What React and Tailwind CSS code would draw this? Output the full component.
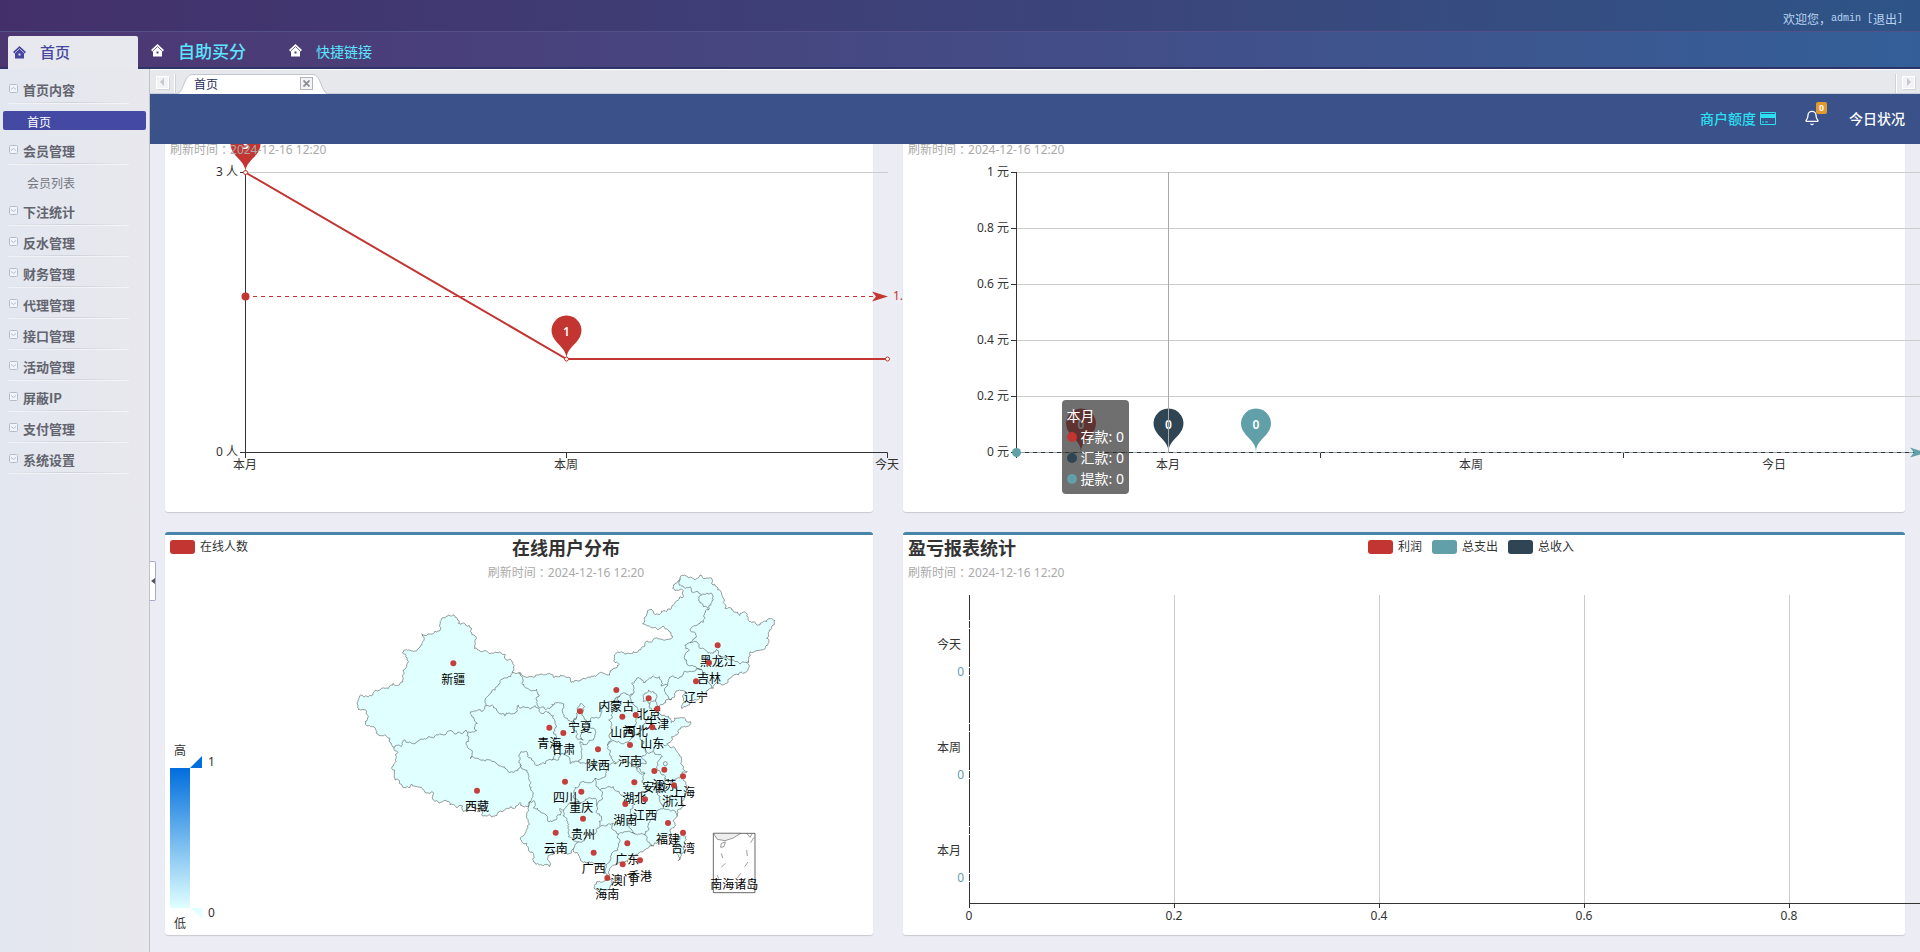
import React from 'react';
import { Bell } from 'lucide-react';

const RED = '#c23531';
const NAVY = '#2f4554';
const TEAL = '#61a0a8';

const MENU = [
  { title: '首页内容', items: [{ name: '首页', active: true }] },
  { title: '会员管理', items: [{ name: '会员列表' }] },
  { title: '下注统计' },
  { title: '反水管理' },
  { title: '财务管理' },
  { title: '代理管理' },
  { title: '接口管理' },
  { title: '活动管理' },
  { title: '屏蔽IP' },
  { title: '支付管理' },
  { title: '系统设置' },
];

// Map geometry, three units per pixel
const MAINLAND = [
  [-428, 432], [-418, 405], [-380, 398], [-355, 385], [-320, 370], [-290, 355], [-290, 330], [-280, 315], [-293, 278],
  [-248, 268], [-235, 222], [-208, 222], [-180, 212], [-180, 185], [-155, 165], [-138, 165], [-125, 190], [-102, 195],
  [-85, 205], [-70, 235], [-77, 265], [-55, 275], [-20, 280], [17, 297], [37, 337], [57, 338], [120, 343], [160, 352],
  [213, 367], [245, 360], [275, 348], [330, 345], [340, 325], [358, 313], [343, 295], [350, 278], [375, 283], [400, 275],
  [425, 262], [440, 243], [480, 237], [517, 228], [505, 210], [490, 198], [455, 203], [428, 192], [440, 165], [452, 148],
  [498, 155], [520, 135], [550, 110], [550, 92], [525, 92], [520, 75], [540, 55], [560, 48], [600, 45], [635, 55],
  [650, 80], [668, 110], [675, 145], [700, 155], [740, 160], [752, 185], [780, 195], [800, 185], [825, 182], [815, 205],
  [800, 235], [785, 270], [750, 275], [745, 300], [748, 320], [735, 338], [715, 345], [695, 350], [680, 370], [650, 368],
  [640, 385], [620, 400], [590, 420], [560, 438], [545, 445], [553, 425], [558, 400], [538, 390], [515, 418], [490, 433],
  [478, 440], [472, 450], [480, 463], [505, 468], [513, 488], [540, 473], [572, 485], [560, 500], [535, 510], [515, 530],
  [500, 552], [510, 562], [535, 580], [545, 605], [562, 635], [540, 650], [556, 665], [560, 690], [552, 715], [550, 740],
  [532, 768], [525, 790], [510, 810], [490, 835], [460, 858], [440, 865], [415, 880], [390, 895], [370, 910], [335, 920],
  [330, 945], [315, 935], [318, 915], [300, 912], [280, 910], [255, 905], [235, 882], [220, 868], [180, 875], [150, 885],
  [148, 920], [125, 915], [100, 905], [100, 880], [85, 870], [80, 850], [65, 845], [65, 830], [82, 805], [85, 780],
  [85, 740], [60, 727], [20, 745], [-15, 768], [-50, 768], [-60, 745], [-110, 755], [-112, 738], [-130, 743],
  [-150, 735], [-190, 722], [-230, 690], [-265, 672], [-270, 682], [-315, 660], [-325, 625], [-312, 595], [-318, 562],
  [-330, 535], [-365, 525], [-385, 500], [-405, 485], [-395, 470], [-400, 455], [-418, 450],
];

const ISLANDS = [
  [[290, 965], [320, 953], [336, 965], [325, 990], [305, 1002], [288, 988]],
  [[545, 825], [557, 830], [552, 860], [545, 880], [535, 902], [523, 875], [530, 845]],
];

const BORDERS = [
  [[-318, 562], [-285, 540], [-240, 538], [-215, 530], [-160, 518], [-102, 510], [-97, 517]],
  [[-97, 517], [-70, 512], [-68, 490], [-88, 455], [-42, 437], [-30, 400], [-5, 375], [32, 350], [37, 337]],
  [[-42, 437], [-10, 447], [45, 460], [55, 435], [75, 442], [105, 437], [140, 455], [165, 490], [170, 530], [160, 555], [165, 580], [155, 600]],
  [[-97, 517], [-102, 550], [-90, 595], [-50, 600], [-10, 612], [5, 620], [30, 637], [65, 615]],
  [[62, 612], [85, 640], [93, 690], [95, 715], [85, 740]],
  [[62, 612], [63, 575], [80, 575], [95, 600], [120, 612], [145, 600], [155, 600]],
  [[57, 338], [70, 360], [73, 380], [110, 388], [118, 405], [110, 420], [150, 445], [192, 432], [188, 460], [205, 482], [230, 470]],
  [[240, 432], [232, 450], [230, 470], [215, 490], [222, 510], [230, 535], [250, 540], [245, 515], [265, 505], [258, 480], [245, 465], [254, 440], [240, 432]],
  [[155, 600], [185, 580], [210, 610], [235, 605], [245, 580], [240, 545], [280, 540], [287, 515], [265, 505]],
  [[235, 605], [265, 608], [310, 618]],
  [[265, 500], [272, 475], [300, 470], [302, 440], [330, 425], [360, 408]],
  [[360, 408], [335, 440], [326, 480], [330, 520], [322, 555], [335, 590], [345, 612]],
  [[345, 612], [310, 618], [318, 645], [285, 655]],
  [[360, 408], [398, 402], [395, 430], [408, 460], [398, 500], [395, 532]],
  [[322, 555], [360, 548], [395, 532]],
  [[398, 402], [395, 370], [410, 355], [430, 368], [460, 348], [478, 350], [483, 378], [503, 376]],
  [[503, 376], [508, 352], [540, 350], [575, 335], [605, 328]],
  [[605, 328], [590, 325], [560, 300], [568, 270], [555, 255], [570, 248]],
  [[570, 248], [590, 228], [570, 210], [600, 190], [615, 175], [625, 150], [610, 140], [600, 128], [605, 105], [580, 98], [570, 80], [545, 78], [540, 55]],
  [[605, 105], [635, 100], [640, 120], [625, 150]],
  [[570, 248], [590, 245], [600, 265], [650, 268], [665, 290], [700, 300], [720, 312], [747, 305]],
  [[605, 328], [622, 350], [636, 385]],
  [[503, 376], [500, 405], [515, 418]],
  [[430, 410], [445, 390], [465, 400], [467, 420], [450, 432], [430, 425], [430, 410]],
  [[467, 420], [478, 440]],
  [[450, 432], [458, 452], [472, 452]],
  [[472, 455], [445, 470], [430, 495], [415, 520], [395, 532]],
  [[415, 520], [432, 545], [425, 560], [440, 575], [460, 575], [500, 556]],
  [[425, 560], [440, 580], [425, 592], [438, 612], [410, 622], [435, 640]],
  [[345, 612], [400, 620], [435, 640]],
  [[460, 575], [487, 590], [470, 620], [482, 640], [495, 655], [540, 655]],
  [[495, 655], [480, 685], [445, 690], [430, 670], [435, 640]],
  [[300, 690], [340, 680], [385, 702], [430, 695], [445, 690]],
  [[285, 655], [262, 668], [240, 670], [225, 682], [220, 710], [235, 728], [265, 715], [282, 715], [290, 737], [303, 720], [300, 690], [285, 655]],
  [[235, 728], [190, 755], [200, 775], [205, 800], [205, 830], [235, 845]],
  [[85, 740], [100, 722], [120, 755], [145, 785], [165, 780], [180, 745], [190, 752]],
  [[235, 845], [220, 868]],
  [[290, 737], [305, 770], [300, 800], [325, 792]],
  [[235, 845], [260, 825], [290, 815], [300, 800]],
  [[325, 792], [340, 790], [355, 822], [355, 850], [335, 880], [318, 915]],
  [[355, 822], [380, 815], [405, 822], [435, 825], [443, 845], [460, 858]],
  [[430, 695], [400, 720], [393, 770], [405, 822]],
  [[435, 825], [445, 790], [470, 760], [490, 745], [480, 720], [480, 685]],
  [[490, 745], [515, 752], [532, 768]],
];

const PROVINCES = [
  ['新疆', -140, 310], ['西藏', -69, 692], ['黑龙江', 653, 256], ['吉林', 627, 308], ['辽宁', 588, 364],
  ['内蒙古', 349, 390], ['北京', 446, 415], ['天津', 472, 446], ['山西', 367, 470], ['河北', 407, 465],
  ['宁夏', 240, 454], ['山东', 457, 502], ['青海', 148, 503], ['甘肃', 190, 519], ['河南', 390, 555],
  ['陕西', 294, 568], ['安徽', 463, 633], ['江苏', 493, 629], ['上海', 549, 649], ['浙江', 522, 676],
  ['湖北', 403, 667], ['四川', 195, 665], ['重庆', 244, 695], ['江西', 435, 718], ['湖南', 376, 732],
  ['贵州', 249, 776], ['福建', 504, 789], ['云南', 167, 818], ['台湾', 549, 818], ['广东', 382, 850],
  ['广西', 281, 878], ['香港', 420, 901], ['澳门', 368, 913], ['海南', 322, 954],
];

// Midpoint displacement, so that borders come out as uneven as real ones
function roughen(a, b) {
  const dx = b[0] - a[0];
  const dy = b[1] - a[1];
  if (Math.hypot(dx, dy) < 6) return [b];
  const n = Math.sin(a[0] * 12.9898 + a[1] * 78.233 + b[0] * 3.7) * 43758.5453;
  const k = (n - Math.floor(n) - 0.5) * 0.6;
  const mid = [(a[0] + b[0]) / 2 - dy * k, (a[1] + b[1]) / 2 + dx * k];
  return [...roughen(a, mid), ...roughen(mid, b)];
}

function toPath(points, closed) {
  const pts = closed ? [...points, points[0]] : points;
  const out = [pts[0]];
  for (let i = 1; i < pts.length; i++) out.push(...roughen(pts[i - 1], pts[i]));
  return 'M' + out.map(p => `${p[0].toFixed(1)} ${p[1].toFixed(1)}`).join('L') + (closed ? 'Z' : '');
}

const Label = ({ x, y, anchor = 'middle', fill = '#333', size = 12, bold, children }) => (
  <text x={x} y={y} textAnchor={anchor} dominantBaseline="central" fill={fill} fontSize={size} fontWeight={bold ? 700 : 400}>
    {children}
  </text>
);

const Updated = ({ x, anchor = 'start' }) => (
  <Label x={x} y={37} anchor={anchor} fill="#aaa">
    刷新时间<tspan className="font-['Noto_Sans_CJK_TC',sans-serif]">：</tspan>2024-12-16 12:20
  </Label>
);

const Pin = ({ x, y, color, value }) => (
  <g transform={`translate(${x} ${y})`}>
    <path d="M-13.55 -22.14A15 15 0 1 1 13.55 -22.14C9.69 -14.01 0 -10.5 0 0C0 -10.5 -9.69 -14.01 -13.55 -22.14Z" fill={color} />
    <text y={-28} textAnchor="middle" dominantBaseline="central" fill="#fff" fontSize={12} fontWeight={600}>{value}</text>
  </g>
);

const Swatch = ({ x, color, label }) => (
  <g>
    <rect x={x} y={5} width={25} height={14} rx={3} fill={color} />
    <Label x={x + 30} y={11} anchor="start">{label}</Label>
  </g>
);

const Chart = ({ width, label, children }) => (
  <svg
    width={width}
    height={400}
    role="img"
    aria-label={label}
    className="block max-w-none overflow-visible font-['Noto_Sans','Noto_Sans_CJK_SC',sans-serif]"
  >
    {children}
  </svg>
);

const Card = ({ children }) => (
  <section className="relative rounded-[3px] border-t-[3px] border-[#4985a8] bg-white shadow-[0_1px_1px_rgba(0,0,0,0.15)]">
    {children}
  </section>
);

function MemberChart() {
  return (
    <Chart width={802} label="会员">
      <path d="M80 60.5H723" stroke="#ccc" />
      <path d="M80.5 60V346M75 60.5H80M75 340.5H722.5V346M401.5 340V346" stroke="#333" fill="none" />
      <Label x={73} y={59} anchor="end">3 人</Label>
      <Label x={73} y={339} anchor="end">0 人</Label>
      <Label x={80} y={352}>本月</Label>
      <Label x={401} y={352}>本周</Label>
      <Label x={722} y={352}>今天</Label>
      <path d="M80.5 60.5L401.5 247H722.5" stroke={RED} strokeWidth={2} fill="none" />
      {[[80.5, 60.5], [401.5, 247], [722.5, 247]].map(([x, y]) => (
        <circle key={x} cx={x} cy={y} r={2} fill="#fff" stroke={RED} />
      ))}
      <path d="M80 184.5H708" stroke={RED} strokeDasharray="4 4" />
      <circle cx={80.5} cy={184.5} r={4} fill={RED} />
      <path d="M723 184.5L707 179.5L711 184.5L707 189.5Z" fill={RED} />
      <Label x={728} y={183} anchor="start" fill={RED}>1.67</Label>
      <Pin x={80.5} y={60.5} color={RED} value="3" />
      <Pin x={401.5} y={247} color={RED} value="1" />
      <Updated x={5} />
    </Chart>
  );
}

function MoneyChart() {
  const ticks = ['1', '0.8', '0.6', '0.4', '0.2', '0'];
  return (
    <Chart width={1137} label="存款 汇款 提款">
      <Updated x={5} />
      {ticks.map((t, i) => (
        <g key={t}>
          {t !== '0' && <path d={`M114 ${60.5 + i * 56}H1023`} stroke="#ccc" />}
          <path d={`M108 ${60.5 + i * 56}H114`} stroke="#333" />
          <Label x={106} y={59 + i * 56} anchor="end">{t} 元</Label>
        </g>
      ))}
      <path d="M113.5 60V346M113 340.5H1023M417.5 340V346M720.5 340V346" stroke="#333" fill="none" />
      <Label x={265} y={352}>本月</Label>
      <Label x={568} y={352}>本周</Label>
      <Label x={871} y={352}>今日</Label>
      <path d="M118 340.5H1010" stroke="#8fa9ac" strokeDasharray="4 4" />
      <circle cx={113.5} cy={340.5} r={4.5} fill={TEAL} />
      <path d="M1023 340.5L1007 335.5L1011 340.5L1007 345.5Z" fill={TEAL} />
      <Pin x={178} y={340} color={RED} value="0" />
      <Pin x={265.5} y={340} color={NAVY} value="0" />
      <Pin x={353} y={340} color={TEAL} value="0" />
      <path d="M265.5 60V340" stroke="#aaa" />
    </Chart>
  );
}

function MoneyTooltip() {
  const rows = [['存款', RED], ['汇款', NAVY], ['提款', TEAL]];
  return (
    <div className="absolute top-[288px] left-[159px] rounded bg-[rgba(50,50,50,0.7)] p-[5px] font-['Noto_Sans','Noto_Sans_CJK_SC',sans-serif] text-sm leading-[21px] whitespace-nowrap text-white">
      <div>本月</div>
      {rows.map(([name, color]) => (
        <div key={name} className="flex items-center gap-1">
          <span className="size-[10px] rounded-full" style={{ backgroundColor: color }} />
          {name}: 0
        </div>
      ))}
    </div>
  );
}

function MapChart() {
  const px = x => 335 + x / 3;
  const py = y => 25 + y / 3;
  return (
    <Chart width={802} label="在线用户分布">
      <defs>
        <linearGradient id="range" x1="0" y1="0" x2="0" y2="1">
          <stop offset="0" stopColor="#006edd" />
          <stop offset="1" stopColor="#e0ffff" />
        </linearGradient>
      </defs>
      <Swatch x={5} color={RED} label="在线人数" />
      <Label x={401} y={13} size={18} bold>在线用户分布</Label>
      <Updated x={401} anchor="middle" />

      <Label x={15} y={215}>高</Label>
      <rect x={5} y={233} width={20} height={140} fill="url(#range)" />
      <path d="M25 233L37 221V233Z" fill="#006edd" />
      <path d="M25 373H37V383Z" fill="#e0ffff" />
      <Label x={43} y={226} anchor="start">1</Label>
      <Label x={43} y={377} anchor="start">0</Label>
      <Label x={15} y={388}>低</Label>

      <g transform="translate(335 25) scale(0.33333)" stroke="#444" strokeWidth={1.6} fill="none" strokeLinejoin="round">
        <path d={toPath(MAINLAND, true)} fill="#e0ffff" />
        {ISLANDS.map((pts, i) => <path key={i} d={toPath(pts, true)} fill="#e0ffff" />)}
        {BORDERS.map((pts, i) => <path key={i} d={toPath(pts)} />)}
        <circle cx={496} cy={611} r={6} />
        <path d="M640 820H765V998H640Z" fill="#fff" strokeWidth={2.4} />
        <path d="M640 820L652 838L675 842L700 834L722 820Z" fill="#eee" />
        <path d="M740 820L750 832L756 822M664 850L676 846L672 860L662 862ZM664 880L668 894M676 910L664 922M652 946L656 956M762 832L752 848M740 870L742 888M744 906L734 920M722 940L712 954" />
      </g>
      {PROVINCES.map(([name, x, y]) => <Label key={name} x={px(x)} y={py(y) + 16} fill="#000">{name}</Label>)}
      {PROVINCES.map(([name, x, y]) => <circle key={name} cx={px(x)} cy={py(y)} r={3} fill={RED} opacity={0.95} />)}
      <Label x={px(703)} y={py(973)} fill="#000">南海诸岛</Label>
    </Chart>
  );
}

function ProfitChart() {
  const days = ['今天', '本周', '本月'];
  return (
    <Chart width={1137} label="盈亏报表统计">
      <Label x={5} y={13} anchor="start" size={18} bold>盈亏报表统计</Label>
      <Updated x={5} />
      <Swatch x={465} color={RED} label="利润" />
      <Swatch x={529} color={TEAL} label="总支出" />
      <Swatch x={605} color={NAVY} label="总收入" />
      {['0', '0.2', '0.4', '0.6', '0.8'].map((t, i) => (
        <g key={t}>
          {i > 0 && <path d={`M${66.5 + i * 205} 60V368`} stroke="#ccc" />}
          <path d={`M${66.5 + i * 205} 368V373`} stroke="#333" />
          <Label x={66 + i * 205} y={380}>{t}</Label>
        </g>
      ))}
      <path d="M66.5 60V368.5H1091" stroke="#333" fill="none" />
      {days.map((d, i) => {
        const y = 85 + i * 103;
        return (
          <g key={d}>
            {[0, 8, 47, 55].map(o => <path key={o} d={`M65 ${y + o + 0.5}H68`} stroke="#fff" />)}
            <Label x={58} y={y + 24} anchor="end">{d}</Label>
            <Label x={61} y={y + 51} anchor="end" fill={TEAL}>0</Label>
          </g>
        );
      })}
    </Chart>
  );
}

const HomeIcon = ({ detail }) => (
  <svg width={13} height={13} viewBox="0 0 13 13" fill="currentColor" className="shrink-0" aria-hidden="true">
    <path d="M6.5 0L13 6L11.5 7.5L11 7V12.5H2V7L1.5 7.5L0 6Z" />
    <path d="M2 6.8L6.5 2.6L11 6.8" fill="none" stroke={detail} strokeWidth={0.8} />
    <rect x={5.5} y={7.5} width={2} height={2} fill={detail} />
  </svg>
);

const ScrollButton = ({ label, path }) => (
  <button type="button" aria-label={label} className="flex size-[13px] items-center justify-center border border-white bg-[#f3f3f5] shadow-[1px_1px_0_#d4d5da]">
    <svg width={7} height={8} viewBox="0 0 7 8" fill="#c6c8cc" aria-hidden="true"><path d={path} /></svg>
  </button>
);

function Header() {
  return (
    <header className="font-['Noto_Sans_CJK_SC',sans-serif]">
      <div className="flex h-[31px] items-center justify-end bg-linear-to-r from-[#43306b] to-[#2e5487] pt-[6px] pr-[17px] text-xs text-[#b9d5f3]">
        <span>欢迎您，</span>
        <span className="font-['Liberation_Mono',monospace] text-[10px] whitespace-pre">admin [</span>
        <a href="#logout">退出</a>
        <span className="font-['Liberation_Mono',monospace] text-[10px]">]</span>
      </div>
      <nav className="flex h-[38px] items-end border-t border-b-2 border-t-[#54508a] border-b-[#2f3468] bg-linear-to-r from-[#4c3672] to-[#335f98] pl-2">
        <a href="#home" className="-mb-[2px] flex h-[33px] w-[130px] items-center gap-[14px] rounded-t-[2px] bg-[#e7e9ef] px-[5px] text-[15px] font-medium text-[#4646a0]">
          <HomeIcon detail="#e7e9ef" />首页
        </a>
        <a href="#buy" className="flex h-[33px] w-[138px] items-center gap-[14px] pl-[13px] text-[17px] font-medium text-[#5ce6ff]">
          <span className="text-white"><HomeIcon detail="#4a3f80" /></span>自助买分
        </a>
        <a href="#links" className="flex h-[33px] w-[138px] items-center gap-[14px] pl-[13px] text-sm text-[#5ce6ff]">
          <span className="text-white"><HomeIcon detail="#4a3f80" /></span>快捷链接
        </a>
      </nav>
    </header>
  );
}

function Sidebar() {
  return (
    <aside className="w-[150px] shrink-0 border-r border-[#bfc1cb] bg-linear-to-r from-[#e3e7f0] to-[#e8e8ed] pt-[3px] font-['Noto_Sans_CJK_SC',sans-serif]">
      {MENU.map(group => (
        <div key={group.title}>
          <button type="button" className="flex h-[30px] w-full items-center gap-[5px] pt-[5px] pl-[9px] text-[13px] font-bold text-[#62646e]">
            <svg width={9} height={9} viewBox="0 0 9 9" fill="none" stroke="#b4bccb" className="-mt-[3px]" aria-hidden="true">
              <rect x={0.5} y={0.5} width={8} height={8} rx={1} fill="#f1f4f8" />
              <path d={group.items ? 'M2 5.5L4.5 3.5L7 5.5' : 'M2 3.5L4.5 5.5L7 3.5'} />
            </svg>
            {group.title}
          </button>
          <div className="mr-5 ml-2 h-px bg-linear-to-r from-transparent via-[#cfd1d8] to-transparent shadow-[0_1px_0_rgba(255,255,255,0.5)]" />
          {group.items?.map(item => (
            <a
              key={item.name}
              href="#page"
              className={`mx-[3px] mt-2 mb-[3px] flex h-[19px] items-center rounded-[2px] pt-[2px] pl-6 text-xs ${item.active ? 'bg-[#444aa4] text-white' : 'text-[#74767f]'}`}
            >
              {item.name}
            </a>
          ))}
        </div>
      ))}
    </aside>
  );
}

function TabStrip() {
  return (
    <div className="flex h-[25px] items-end border-t border-b border-t-white border-b-[#c9cedb] bg-[#e7e8eb] font-['Noto_Sans_CJK_SC',sans-serif]">
      <div className="flex h-[19px] w-[25px] items-center border-r border-white pb-[3px] pl-[6px] shadow-[1px_0_0_#d0d2d8]">
        <ScrollButton label="向左" path="M5 0V8L1 4Z" />
      </div>
      <div className="-mb-px ml-[3px] flex h-5">
        <svg width={14} height={20} viewBox="0 0 14 20" aria-hidden="true">
          <path d="M0 20C6 17 6 1 14 0.5V20Z" fill="#fff" />
          <path d="M0 19.5C6 17 6 1 14 0.5" fill="none" stroke="#c3c6d0" />
        </svg>
        <div className="flex w-[121px] items-center justify-between border-t border-[#c3c6d0] bg-white pb-[2px] pl-[2px] text-xs text-[#2a2f5e]">
          首页
          <button type="button" aria-label="关闭" className="flex size-[13px] items-center justify-center border border-[#b3b5be] bg-[#f4f4f6]">
            <svg width={7} height={7} viewBox="0 0 7 7" stroke="#8b8d93" strokeWidth={1.8} aria-hidden="true"><path d="M0.5 0.5L6.5 6.5M6.5 0.5L0.5 6.5" /></svg>
          </button>
        </div>
        <svg width={14} height={20} viewBox="0 0 14 20" aria-hidden="true">
          <path d="M14 20C8 17 8 1 0 0.5V20Z" fill="#fff" />
          <path d="M14 19.5C8 17 8 1 0 0.5" fill="none" stroke="#c3c6d0" />
        </svg>
      </div>
      <div className="ml-auto flex h-[19px] w-6 items-center border-l border-white pb-[3px] pl-[5px] shadow-[-1px_0_0_#d0d2d8]">
        <ScrollButton label="向右" path="M2 0V8L6 4Z" />
      </div>
    </div>
  );
}

function Toolbar() {
  return (
    <div className="relative z-10 flex h-[50px] items-center justify-end bg-[#3a5189] pr-[15px] pb-[2px] font-['Noto_Sans_CJK_SC',sans-serif] text-sm font-medium text-white">
      <a href="#quota" className="flex items-center gap-1 text-[#2bdff0]">
        商户额度
        <svg width={16} height={13} viewBox="0 0 16 13" fill="currentColor" aria-hidden="true">
          <path fillRule="evenodd" d="M1 0H15Q16 0 16 1V12Q16 13 15 13H1Q0 13 0 12V1Q0 0 1 0ZM1 1V2H15V1ZM1 6V12H15V6Z" />
          <path d="M2 9.5H4V10.5H2ZM5 9.5H8V10.5H5Z" />
        </svg>
      </a>
      <button type="button" aria-label="通知" className="relative ml-[28px]">
        <Bell size={16} strokeWidth={2} />
        <span className="absolute -top-2 left-3 rounded-[2px] bg-[#e29a30] px-[3px] font-['Liberation_Sans',sans-serif] text-[9px] leading-3 font-bold text-white">0</span>
      </button>
      <a href="#today" className="ml-[29px]">今日状况</a>
    </div>
  );
}

export default function App() {
  return (
    <div className="flex min-h-screen flex-col">
      <Header />
      <div className="flex flex-1">
        <Sidebar />
        <main className="relative min-w-0 flex-1 overflow-hidden bg-[#ecedf4]">
          <TabStrip />
          <Toolbar />
          {/* the dashboard is scrolled a little, its first row runs under the toolbar */}
          <div className="-mt-[35px] grid grid-cols-12 gap-y-5 pb-4">
            <div className="col-span-5 px-[15px]"><Card><MemberChart /></Card></div>
            <div className="col-span-7 px-[15px]"><Card><MoneyChart /><MoneyTooltip /></Card></div>
            <div className="col-span-5 px-[15px]"><Card><MapChart /></Card></div>
            <div className="col-span-7 px-[15px]"><Card><ProfitChart /></Card></div>
          </div>
          <button type="button" aria-label="收起菜单" className="absolute top-[492px] left-0 flex h-10 w-[6px] items-center justify-center rounded-r-[2px] border border-l-0 border-[#a3abd0] bg-white">
            <svg width={4} height={6} viewBox="0 0 4 6" fill="#555" aria-hidden="true"><path d="M4 0V6L0 3Z" /></svg>
          </button>
        </main>
      </div>
    </div>
  );
}
